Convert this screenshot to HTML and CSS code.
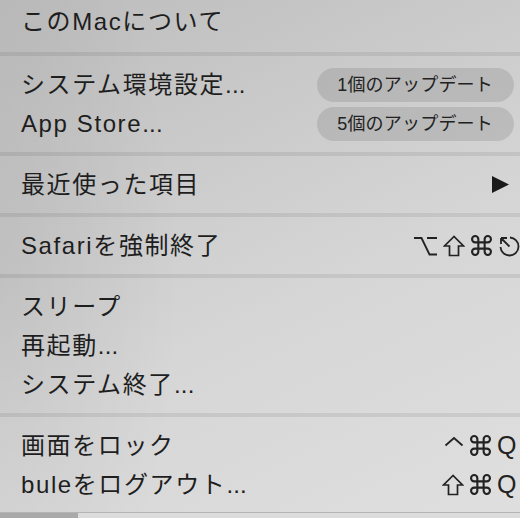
FILE: index.html
```html
<!DOCTYPE html>
<html lang="ja">
<head>
<meta charset="utf-8">
<link rel="stylesheet" href="styles.css">
</head>
<body>
<div class="menu">
  <div class="group group-top">
    <div class="row"><span class="label">このMacについて</span></div>
  </div>
  <div class="sep"></div>
  <div class="group">
    <div class="row"><span class="label">システム環境設定<span class="dots">...</span></span><span class="pill pill-1">1個のアップデート</span></div>
    <div class="row"><span class="label">App Store<span class="dots">...</span></span><span class="pill pill-5">5個のアップデート</span></div>
  </div>
  <div class="sep"></div>
  <div class="group">
    <div class="row"><span class="label">最近使った項目</span>
      <svg class="arrow" width="17" height="17" viewBox="0 0 17 17"><polygon points="0,0 17,8.5 0,17"/></svg>
    </div>
  </div>
  <div class="sep"></div>
  <div class="group">
    <div class="row"><span class="label">Safariを強制終了</span>
      <span class="keys">
        <svg class="k k-thin" width="23" height="22" viewBox="0 0 23 22"><path d="M0 3H7.5L15.5 19.5H23M13 3H23"/></svg>
        <svg class="k k-shift" width="22" height="22" viewBox="0 0 22 22"><path d="M11 1.5L1.5 11H6.5V20.5H15.5V11H20.5Z"/></svg>
        <svg class="k" width="21" height="21" viewBox="2 2 20 20"><path d="M15 6v12a3 3 0 1 0 3-3H6a3 3 0 1 0 3 3V6a3 3 0 1 0-3 3h12a3 3 0 1 0-3-3"/></svg>
        <svg class="k k-thin" width="22" height="22" viewBox="0 0 22 22"><path d="M12 2.5A9 9 0 1 1 2.5 12M11.5 11.5L3 3M3 3H9M3 3V9"/></svg>
      </span>
    </div>
  </div>
  <div class="sep"></div>
  <div class="group">
    <div class="row"><span class="label">スリープ</span></div>
    <div class="row"><span class="label">再起動<span class="dots">...</span></span></div>
    <div class="row"><span class="label">システム終了<span class="dots">...</span></span></div>
  </div>
  <div class="sep"></div>
  <div class="group group-last">
    <div class="row"><span class="label">画面をロック</span>
      <span class="keys">
        <svg class="k k-thin" width="20" height="22" viewBox="0 0 20 22"><path d="M1.5 10.5L10 3L18.5 10.5"/></svg>
        <svg class="k" width="21" height="21" viewBox="2 2 20 20"><path d="M15 6v12a3 3 0 1 0 3-3H6a3 3 0 1 0 3 3V6a3 3 0 1 0-3 3h12a3 3 0 1 0-3-3"/></svg>
        <span class="q">Q</span>
      </span>
    </div>
    <div class="row"><span class="label">buleをログアウト<span class="dots">...</span></span>
      <span class="keys">
        <svg class="k k-shift" width="22" height="22" viewBox="0 0 22 22"><path d="M11 1.5L1.5 11H6.5V20.5H15.5V11H20.5Z"/></svg>
        <svg class="k" width="21" height="21" viewBox="2 2 20 20"><path d="M15 6v12a3 3 0 1 0 3-3H6a3 3 0 1 0 3 3V6a3 3 0 1 0-3 3h12a3 3 0 1 0-3-3"/></svg>
        <span class="q">Q</span>
      </span>
    </div>
  </div>
</div>
<div class="under">
  <div class="under-left"></div>
  <div class="under-right"></div>
</div>
</body>
</html>
```
FILE: styles.css
```css
html, body {
  margin: 0;
  padding: 0;
}
body {
  width: 520px;
  height: 518px;
  overflow: hidden;
  font-family: "Liberation Sans", "Noto Sans CJK JP", sans-serif;
  color: #1e1e1e;
  background:
    radial-gradient(ellipse 180px 420px at 0% 55%, rgba(0,0,0,0.06), rgba(0,0,0,0) 100%),
    linear-gradient(155deg, #bcbcbc 0%, #c9c9c9 28%, #d6d6d6 58%, #dfdfdf 100%);
}
.menu {
  display: flex;
  flex-direction: column;
}
.group {
  padding: 9px 0;
}
.group-top {
  padding: 2px 0 11px;
}
.group-last {
  padding: 9px 0 8px;
}
.sep {
  height: 4px;
  background: rgba(0,0,0,0.075);
}
.row {
  height: 39px;
  display: flex;
  align-items: center;
  justify-content: space-between;
  padding-left: 21px;
}
.label {
  font-size: 24px;
  line-height: 39px;
  letter-spacing: 1.6px;
  white-space: nowrap;
}
.dots {
  letter-spacing: 0.2px;
}
.pill {
  font-size: 18px;
  line-height: 34px;
  height: 34px;
  border-radius: 17px;
  background: rgba(0,0,0,0.1);
  color: #222;
  padding: 0 21px 0 20px;
  margin-right: 6px;
  letter-spacing: 0.2px;
  white-space: nowrap;
}
.arrow {
  margin-right: 11px;
  fill: #1a1a1a;
}
.keys {
  display: flex;
  align-items: center;
  gap: 6px;
}
.k {
  fill: none;
  stroke: #222;
  stroke-width: 2;
  flex: none;
}
.k-thin {
  stroke-width: 1.8;
}
.k-shift {
  stroke-width: 1.7;
}
.q {
  width: 23px;
  font-size: 25px;
  line-height: 39px;
  color: #222;
}
.under {
  display: flex;
  height: 6px;
  border-top: 1px solid #b4b4b4;
}
.under-left {
  width: 78px;
  background: #a9a9a9;
}
.under-right {
  flex: 1;
  background: #dcdcdc;
}
```
